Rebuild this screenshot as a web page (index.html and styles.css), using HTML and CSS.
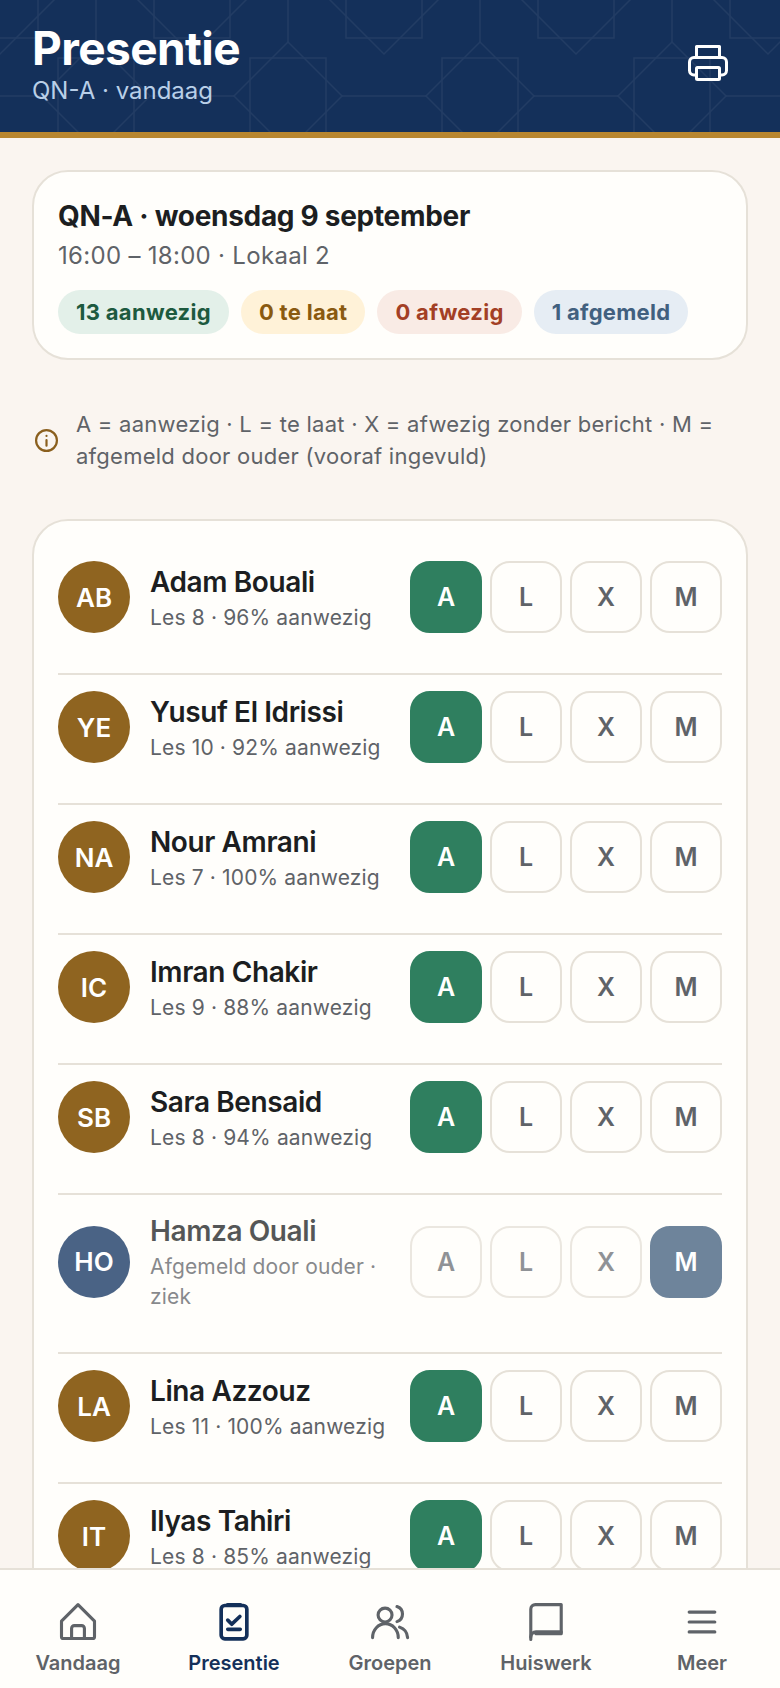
FILE: index.html
```html
<!DOCTYPE html>
<html lang="nl">
<head>
<meta charset="UTF-8" />
<meta name="viewport" content="width=device-width, initial-scale=1" />
<title>Presentie</title>
<link rel="stylesheet" href="styles.css">
</head>
<body>

<header class="topbar">
  <svg class="topbar-pattern" aria-hidden="true">
    <defs>
      <pattern id="stars" width="192" height="192" patternUnits="userSpaceOnUse">
        <g fill="none" stroke="#fff" stroke-width="1.5">
          <rect x="58" y="58" width="76" height="76" />
          <path d="M96 42 150 96 96 150 42 96Z" />
          <path d="M96 0V42M96 150V192M0 96H42M150 96H192" />
          <rect x="-38" y="-38" width="76" height="76" />
          <rect x="154" y="-38" width="76" height="76" />
          <path d="M-54 0 0-54 54 0 0 54ZM138 0 192-54 246 0 192 54Z" />
        </g>
      </pattern>
    </defs>
    <rect width="100%" height="100%" fill="url(#stars)" />
  </svg>
  <div class="topbar-text">
    <h1>Presentie</h1>
    <p>QN-A · vandaag</p>
  </div>
  <svg class="print-icon" viewBox="0 0 40 36" fill="none" stroke="currentColor" stroke-width="3" stroke-linecap="round" stroke-linejoin="round">
    <path d="M8.5 12V1.5H31.5V12" />
    <path d="M8 30H6A4.5 4.5 0 0 1 1.5 25.5V17A4.5 4.5 0 0 1 6 12.5H34A4.5 4.5 0 0 1 38.5 17V25.5A4.5 4.5 0 0 1 34 30H32" />
    <rect x="8.5" y="22.5" width="23" height="12" rx="1" />
  </svg>
</header>

<main class="content">
  <section class="card lesson">
    <h2>QN-A · woensdag 9 september</h2>
    <p class="lesson-time">16:00 – 18:00 · Lokaal 2</p>
    <div class="pills">
      <span class="pill pill-green">13 aanwezig</span>
      <span class="pill pill-yellow">0 te laat</span>
      <span class="pill pill-red">0 afwezig</span>
      <span class="pill pill-blue">1 afgemeld</span>
    </div>
  </section>

  <div class="legend">
    <svg class="legend-icon" viewBox="0 0 24 24" fill="none" stroke="currentColor" stroke-width="2.1" stroke-linecap="round" stroke-linejoin="round">
      <circle cx="12" cy="12" r="10" />
      <path d="M12 17v-5.5M12 7.6h.01" />
    </svg>
    <p>A = aanwezig · L = te laat · X = afwezig zonder bericht · M = afgemeld door ouder (vooraf ingevuld)</p>
  </div>

  <section class="card students">
    <div class="student">
      <div class="avatar">AB</div>
      <div class="student-info">
        <div class="student-name">Adam Bouali</div>
        <div class="student-meta">Les 8 · 96% aanwezig</div>
      </div>
      <div class="marks"><span class="mark mark-on">A</span><span class="mark">L</span><span class="mark">X</span><span class="mark">M</span></div>
    </div>
    <div class="student">
      <div class="avatar">YE</div>
      <div class="student-info">
        <div class="student-name">Yusuf El Idrissi</div>
        <div class="student-meta">Les 10 · 92% aanwezig</div>
      </div>
      <div class="marks"><span class="mark mark-on">A</span><span class="mark">L</span><span class="mark">X</span><span class="mark">M</span></div>
    </div>
    <div class="student">
      <div class="avatar">NA</div>
      <div class="student-info">
        <div class="student-name">Nour Amrani</div>
        <div class="student-meta">Les 7 · 100% aanwezig</div>
      </div>
      <div class="marks"><span class="mark mark-on">A</span><span class="mark">L</span><span class="mark">X</span><span class="mark">M</span></div>
    </div>
    <div class="student">
      <div class="avatar">IC</div>
      <div class="student-info">
        <div class="student-name">Imran Chakir</div>
        <div class="student-meta">Les 9 · 88% aanwezig</div>
      </div>
      <div class="marks"><span class="mark mark-on">A</span><span class="mark">L</span><span class="mark">X</span><span class="mark">M</span></div>
    </div>
    <div class="student">
      <div class="avatar">SB</div>
      <div class="student-info">
        <div class="student-name">Sara Bensaid</div>
        <div class="student-meta">Les 8 · 94% aanwezig</div>
      </div>
      <div class="marks"><span class="mark mark-on">A</span><span class="mark">L</span><span class="mark">X</span><span class="mark">M</span></div>
    </div>
    <div class="student student-off">
      <div class="avatar avatar-off">HO</div>
      <div class="student-info">
        <div class="student-name">Hamza Ouali</div>
        <div class="student-meta">Afgemeld door ouder · ziek</div>
      </div>
      <div class="marks"><span class="mark">A</span><span class="mark">L</span><span class="mark">X</span><span class="mark mark-parent">M</span></div>
    </div>
    <div class="student">
      <div class="avatar">LA</div>
      <div class="student-info">
        <div class="student-name">Lina Azzouz</div>
        <div class="student-meta">Les 11 · 100% aanwezig</div>
      </div>
      <div class="marks"><span class="mark mark-on">A</span><span class="mark">L</span><span class="mark">X</span><span class="mark">M</span></div>
    </div>
    <div class="student">
      <div class="avatar">IT</div>
      <div class="student-info">
        <div class="student-name">Ilyas Tahiri</div>
        <div class="student-meta">Les 8 · 85% aanwezig</div>
      </div>
      <div class="marks"><span class="mark mark-on">A</span><span class="mark">L</span><span class="mark">X</span><span class="mark">M</span></div>
    </div>
  </section>
</main>

<nav class="tabs">
  <a class="tab">
    <svg viewBox="0 0 24 24" fill="none" stroke="currentColor" stroke-width="1.7" stroke-linecap="round" stroke-linejoin="round">
      <path d="M8.5 21v-5.5a1.5 1.5 0 0 1 1.5-1.5h4a1.5 1.5 0 0 1 1.5 1.5V21" />
      <path d="M3 11.5 12 2.5l9 9V20a1 1 0 0 1-1 1H4a1 1 0 0 1-1-1z" />
    </svg>
    Vandaag
  </a>
  <a class="tab tab-on">
    <svg viewBox="0 0 24 24" fill="none" stroke="currentColor" stroke-width="2" stroke-linecap="round" stroke-linejoin="round">
      <rect x="5" y="3" width="14" height="18.2" rx="2" />
      <path d="M8.5 2.6h7" />
      <path d="M8.6 11l2.2 2.2 4.4-4.2M8.6 16h6.8" />
    </svg>
    Presentie
  </a>
  <a class="tab">
    <svg viewBox="0 0 24 24" fill="none" stroke="currentColor" stroke-width="1.7" stroke-linecap="round" stroke-linejoin="round">
      <circle cx="9.3" cy="8.2" r="3.8" />
      <path d="M2.5 20.5a7 7.6 0 0 1 14 0" />
      <path d="M15.8 3.6a4.3 4.3 0 0 1 0 8.2" />
      <path d="M17.2 14.8a6.5 6.5 0 0 1 4.4 5.7" />
    </svg>
    Groepen
  </a>
  <a class="tab">
    <svg viewBox="0 0 24 24" fill="none" stroke="currentColor" stroke-width="1.7" stroke-linecap="round" stroke-linejoin="round">
      <path d="M3.7 21.5V5A2.5 2.5 0 0 1 6.2 2.5H20.3V17.6" />
      <path d="M3.7 20.2A2.8 2.8 0 0 1 6.5 17.4H20.3V18.4H6.5" />
    </svg>
    Huiswerk
  </a>
  <a class="tab">
    <svg viewBox="0 0 24 24" fill="none" stroke="currentColor" stroke-width="1.7" stroke-linecap="round" stroke-linejoin="round">
      <path d="M5 6.6h14M5 12h14M5 17.4h14" />
    </svg>
    Meer
  </a>
</nav>

</body>
</html>
```

FILE: styles.css
```css
* {
  box-sizing: border-box;
}
html, body {
  margin: 0;
  height: 100%;
}
body {
  display: flex;
  flex-direction: column;
  height: 1688px;
  overflow: hidden;
  font-family: Inter, "Open Sans", sans-serif;
  background: #faf5f0;
  color: #1c1e21;
}
h1, h2, p {
  margin: 0;
}

/* header */
.topbar {
  position: relative;
  flex: none;
  display: flex;
  align-items: center;
  justify-content: space-between;
  height: 138px;
  padding: 0 52px 6px 32px;
  background: #14305a;
  border-bottom: 6px solid #b8862f;
  color: #fff;
  overflow: hidden;
}
.topbar-pattern {
  position: absolute;
  top: 0;
  left: 0;
  width: 100%;
  height: 100%;
  opacity: 0.06;
}
.topbar-text {
  position: relative;
}
.topbar h1 {
  font-size: 46px;
  line-height: 56px;
  font-weight: 700;
  letter-spacing: -0.6px;
}
.topbar p {
  font-size: 24px;
  line-height: 30px;
  color: #b9cfe8;
}
.print-icon {
  position: relative;
  width: 40px;
  height: 36px;
}

/* cards */
.content {
  flex: 1;
  min-height: 0;
  overflow: hidden;
  padding: 32px 32px 0;
}
.card {
  background: #fffefb;
  border: 2px solid #e6e1d8;
  border-radius: 36px;
  padding: 25px 24px 24px;
}
.lesson h2 {
  font-size: 28px;
  line-height: 38px;
  font-weight: 700;
  letter-spacing: -0.3px;
}
.lesson-time {
  margin-top: 4px;
  font-size: 24px;
  line-height: 34px;
  letter-spacing: 0.3px;
  color: #5f6368;
}
.pills {
  display: flex;
  gap: 12px;
  margin-top: 17px;
}
.pill {
  padding: 0 18px;
  height: 44px;
  line-height: 44px;
  border-radius: 22px;
  font-size: 22px;
  font-weight: 700;
  letter-spacing: 0.3px;
}
.pill-green { background: #e3f0e9; color: #1d5a3f; }
.pill-yellow { background: #fff2d8; color: #8a5a10; }
.pill-red { background: #f9ebe5; color: #a33f25; }
.pill-blue { background: #e6edf4; color: #41607f; }

/* legend */
.legend {
  display: flex;
  align-items: center;
  gap: 17px;
  margin: 48px 0 47px;
  padding-left: 2px;
}
.legend-icon {
  flex: none;
  width: 25px;
  height: 25px;
  color: #8a5f1e;
}
.legend p {
  font-size: 22px;
  line-height: 32px;
  letter-spacing: 0.25px;
  color: #5f6368;
}

/* student rows */
.students {
  padding: 0 24px;
}
.student {
  display: flex;
  align-items: center;
  gap: 20px;
  padding: 16px 0 40px;
  border-bottom: 2px solid #e6e1d8;
}
.student:first-child {
  padding-top: 40px;
}
.avatar {
  flex: none;
  display: flex;
  align-items: center;
  justify-content: center;
  width: 72px;
  height: 72px;
  border-radius: 50%;
  background: #8f6420;
  color: #fff;
  font-size: 26px;
  font-weight: 600;
}
.avatar-off {
  background: #4a6385;
}
.student-info {
  flex: 1;
  min-width: 0;
}
.student-name {
  font-size: 28px;
  line-height: 41px;
  font-weight: 600;
  letter-spacing: -0.4px;
}
.student-meta {
  font-size: 21px;
  line-height: 30px;
  letter-spacing: 0.15px;
  color: #5f6368;
}
.marks {
  flex: none;
  display: flex;
  gap: 8px;
}
.mark {
  display: flex;
  align-items: center;
  justify-content: center;
  width: 72px;
  height: 72px;
  border: 2px solid #e6e1d8;
  border-radius: 20px;
  font-size: 25px;
  font-weight: 600;
  color: #5f6368;
}
.mark-on {
  background: #2f7f5f;
  border-color: #2f7f5f;
  color: #fff;
}
.student-off .student-name,
.student-off .student-meta {
  opacity: 0.75;
}
.student-off .mark {
  color: #8f9296;
  border-color: #ebe7e0;
}
.student-off .mark-parent {
  background: #6e849b;
  border-color: #6e849b;
  color: #fff;
}

/* bottom nav */
.tabs {
  flex: none;
  display: grid;
  grid-template-columns: repeat(5, 1fr);
  height: 120px;
  background: #fffefb;
  border-top: 2px solid #e6e1d8;
}
.tab {
  display: flex;
  flex-direction: column;
  align-items: center;
  padding-top: 30px;
  gap: 7px;
  font-size: 20px;
  line-height: 24px;
  font-weight: 600;
  color: #5f6368;
}
.tab svg {
  width: 44px;
  height: 44px;
}
.tab-on {
  color: #14305a;
}
```
